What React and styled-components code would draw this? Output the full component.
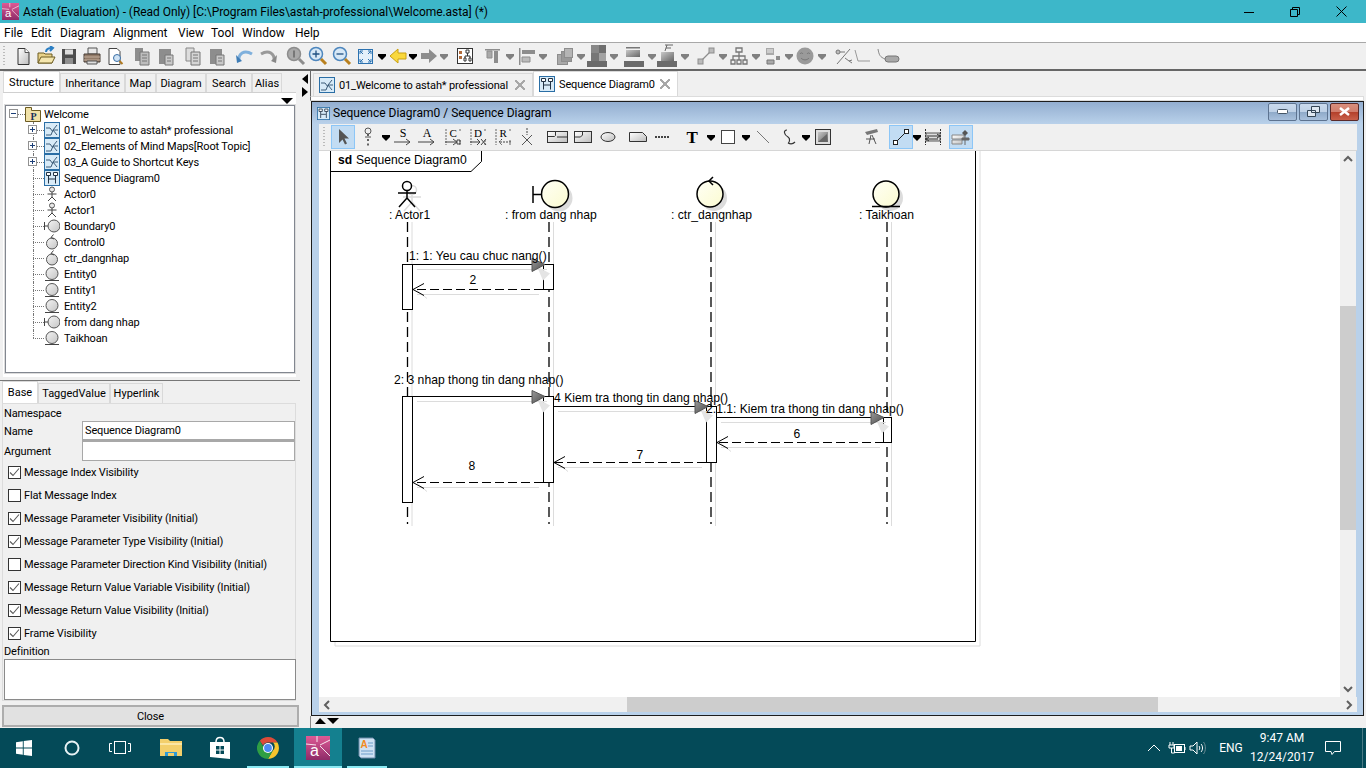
import React from 'react';
import styled, { createGlobalStyle } from 'styled-components';

const UI_FONT = 'Roboto, "Liberation Sans", sans-serif';

const GlobalStyle = createGlobalStyle`
  html, body { margin: 0; padding: 0; background: #f0f0f0; overflow: hidden; }
  * { box-sizing: border-box; }
  body { font-family: ${UI_FONT}; font-size: 11px; letter-spacing: -0.14px; color: #000; }
`;

/* ---------- icons: top toolbar ---------- */
const Ico = ({ w = 20, h = 20, children }) => (
  <svg width={w} height={h} viewBox={`0 0 ${w} ${h}`} style={{ display: 'block', flexShrink: 0 }}>{children}</svg>
);
const G1 = '#8d8d8d';
const G2 = '#a9a9a9';

const NewDoc = () => <Ico><path d="M5 2.500h7l4 4v12H5z" fill="url(#paper)" stroke="#333" /><path d="M12 2.500v4h4" fill="#fff" stroke="#555" /></Ico>;
const OpenDoc = () => <Ico><path d="M2 17V7h6l1 1h7v9z" fill="#e9d38a" stroke="#6d5c22" /><path d="M2 17l3-6h14l-3 6z" fill="#f4e6ae" stroke="#6d5c22" /><path d="M10 6c0-3 2-4 6-4M14 0l3 2-3 3" fill="none" stroke="#2b7fc4" strokeWidth="2" /></Ico>;
const Save = () => <Ico><rect x="3" y="3" width="14" height="15" fill="#4c4c4c" /><rect x="6" y="3.500" width="8" height="5" fill="#dcdcdc" /><rect x="6" y="12" width="8" height="6" fill="#8f8f8f" /></Ico>;
const Print = () => <Ico><path d="M6 2h9v6H6z" fill="#e8e8e8" stroke="#555" /><path d="M2 8h16v8H2z" fill="#927b68" stroke="#4b4038" /><path d="M2 11h16M2 14h16" stroke="#c2ae9c" /><path d="M5 15h10v3H5z" fill="#ddd" stroke="#555" /></Ico>;
const Preview = () => <Ico><path d="M4 2.500h8l3 3v13H4z" fill="#fff" stroke="#444" /><circle cx="12" cy="12" r="3.500" fill="#cfe3f5" stroke="#3a6ea5" /><path d="M14.500 15l3 3" stroke="#b07a22" strokeWidth="2" /></Ico>;
const CopyGray = () => <Ico><path d="M3 2h8v13H3z" fill={G1} /><path d="M8 6h9v13H8z" fill="#bdbdbd" stroke="#777" /><path d="M10 9h5M10 12h5M10 15h5" stroke="#777" /></Ico>;
const PasteGray = () => <Ico><path d="M3 3h12v15H3z" fill={G1} /><path d="M9 9h8v10H9z" fill="#c9c9c9" stroke="#777" /><path d="M11 12h4M11 15h4" stroke="#777" /></Ico>;
const CopyLight = () => <Ico><path d="M3 2h8v13H3z" fill="#ddd" stroke="#888" /><path d="M8 6h9v13H8z" fill="#d5d5d5" stroke="#777" /><path d="M10 9h5M10 12h5M10 15h5" stroke="#777" /></Ico>;
const Undo = () => <Ico><path d="M4 15C3 8 9 3 17 8" fill="none" stroke="#7fb0dc" strokeWidth="3" /><path d="M1 9l6 6-5 2z" fill="#3f7db6" /></Ico>;
const Redo = () => <Ico><path d="M16 15C17 8 11 3 3 8" fill="none" stroke="#999" strokeWidth="3" /><path d="M19 9l-6 6 5 2z" fill="#888" /></Ico>;
const Mag = ({ mark, ring = '#4d86bd', fill = '#d7e8f6', handle = '#b9801e' }) => (
  <Ico>
    <circle cx="8" cy="8" r="6.500" fill={fill} stroke={ring} strokeWidth="1.500" />
    <path d="M13 13l5 5" stroke={handle} strokeWidth="3" />
    {mark}
  </Ico>
);
const ZoomOne = () => <Mag ring={G1} fill={G2} handle={G1} mark={<path d="M7 4.500h2v7H7z" fill="#777" />} />;
const ZoomIn = () => <Mag mark={<path d="M4.500 8h7M8 4.500v7" stroke="#1f4f80" strokeWidth="1.300" />} />;
const ZoomOut = () => <Mag mark={<path d="M4.500 8h7" stroke="#1f4f80" strokeWidth="1.300" />} />;
const Fit = () => <Ico><rect x="3.500" y="3.500" width="14" height="14" fill="#e4f0fa" stroke="#2c72b0" /><path d="M5 5l3 3M5 5h3M5 5v3M16 5l-3 3M16 5h-3M16 5v3M5 16l3-3M5 16h3M5 16v-3M16 16l-3-3M16 16h-3M16 16v-3" stroke="#2c72b0" fill="none" /></Ico>;
const Back = () => <Ico><path d="M2 10l8-7v4h8v6h-8v4z" fill="#f9d83c" stroke="#c9a010" /></Ico>;
const Forward = () => <Ico><path d="M18 10l-8-7v4H2v6h8v4z" fill={G1} /></Ico>;
const TreeGrid = () => <Ico><rect x="2.500" y="2.500" width="15" height="15" fill="#fff" stroke="#333" /><path d="M4 5h3v3H4zM4 10h3v3H4z" fill="#b06a3a" /><path d="M11 4h3v3h-3zM9 12h2v3H9zM14 12h2v3h-2z" fill="none" stroke="#333" /><path d="M12.500 7v3M10 12v-2h5v2" fill="none" stroke="#333" /></Ico>;
const AlignTop = () => <Ico><path d="M2 3h15v1.500H2z" fill={G1} /><path d="M4 5h5v7H4z" fill={G2} stroke={G1} /><path d="M11 5h4v12h-4z" fill={G1} /></Ico>;
const AlignLeft = () => <Ico><path d="M2 2h1.500v17H2z" fill={G1} /><path d="M5 4h13v4H5z" fill={G1} /><path d="M5 11h8v5H5z" fill="#bbb" stroke={G1} /></Ico>;
const Stack = () => <Ico><rect x="2.500" y="8.500" width="10" height="10" fill={G2} stroke={G1} /><rect x="6.500" y="5.500" width="10" height="10" fill="#999" stroke={G1} /><rect x="9.500" y="2.500" width="8" height="9" fill="#b5b5b5" stroke={G1} /></Ico>;
const Checker = () => <Ico h={24}><path d="M4 1h8v8H4z" fill="#888" /><path d="M12 1h7v8h-7z" fill="#6f6f6f" /><path d="M4 9h8v8H4z" fill="#777" /><path d="M12 9h7v8h-7z" fill="#a3a3a3" /><path d="M0 17h20v6H0z" fill="#6b6b6b" /></Ico>;
const Bars = () => <Ico h={24}><path d="M2 3h14v1.500H2z" fill="#777" /><path d="M2 6h14v7H2z" fill="url(#grayfade)" /><path d="M0 17h20v6H0z" fill="#6b6b6b" /></Ico>;
const FontBars = () => <Ico h={24}><path d="M8 1h8M9 4h5M10 1l-2 6" stroke="#666" fill="none" /><path d="M4 8h13v9H4z" fill="url(#grayfade)" /><path d="M0 17h20v6H0z" fill="#6b6b6b" /></Ico>;
const LinkLine = () => <Ico><path d="M5 15L15 5" stroke={G1} strokeWidth="1.300" /><rect x="2" y="13" width="5" height="5" fill="#bbb" stroke={G1} /><rect x="13" y="2" width="5" height="5" fill="#bbb" stroke={G1} /></Ico>;
const OrgChart = () => <Ico><path d="M7 2h6v4H7zM2 14h4v4H2zM8 14h4v4H8zM14 14h4v4h-4z" fill="none" stroke="#777" strokeWidth="1.300" /><path d="M10 6v8M4 14v-4h12v4" fill="none" stroke="#777" strokeWidth="1.300" /></Ico>;
const Blocks = () => <Ico><path d="M3 2h8v7H3z" fill={G2} /><path d="M4 4h6M4 6h6" stroke="#eee" /><path d="M13 10h4v4h-4z" fill={G1} /><path d="M4 14h7v4H4z" fill={G2} stroke="#777" /></Ico>;
const Smile = () => <Ico><circle cx="10" cy="10" r="8.500" fill="#9a9a9a" /><path d="M5 8c1-1.500 2-1.500 3 0M12 8c1-1.500 2-1.500 3 0M6 12c2 2.500 6 2.500 8 0" fill="none" stroke="#777" /></Ico>;
const Percent = () => <Ico><path d="M4 18L17 3" stroke="#777" /><circle cx="5" cy="6" r="2" fill="#bbb" stroke="#777" /><path d="M7 6h5" stroke="#777" /><path d="M12 12l4 3 3-1M16 15l3 2" fill="none" stroke="#777" /></Ico>;
const Elbow = () => <Ico><path d="M3 4l3 11h12" fill="none" stroke="#999" /></Ico>;
const ElbowPill = () => <Ico w={24}><path d="M2 3c1 6 2 8 7 10" fill="none" stroke="#888" /><rect x="9" y="10" width="14" height="6" rx="3" fill={G2} stroke="#777" /></Ico>;
const Caret = ({ gray }) => (
  <Ico w={10} h={10}><path d="M1 3h8v2L5 9 1 5z" fill={gray ? '#808080' : '#000'} /></Ico>
);

/* ---------- icons: diagram toolbar ---------- */
const Arrow = () => <Ico><path d="M6 2l0 14 3.500-3.500 2.500 5 2-1-2.500-5H16z" fill="#555" /></Ico>;
const Lifeline = () => <Ico><circle cx="10" cy="4" r="3" fill="#eee" stroke="#555" /><path d="M10 7v2M10 12v2M10 16.500v2" stroke="#333" strokeWidth="1.500" /><path d="M7 10h6" stroke="#555" /></Ico>;
const MsgGlyph = ({ ch }) => (
  <Ico>
    <text x="10" y="10" textAnchor="middle" fontFamily="Liberation Serif, serif" fontSize="12">{ch}</text>
    <path d="M1 15h16M13 12l4 3-4 3" fill="none" stroke="#444" />
  </Ico>
);
const DashGlyph = ({ ch, tail }) => (
  <Ico>
    <path d="M3 2v16M17 2v3M17 13v5" stroke="#666" strokeDasharray="2 1" />
    <text x="10" y="10" textAnchor="middle" fontFamily="Liberation Serif, serif" fontSize="11">{ch}</text>
    {tail}
  </Ico>
);
const Destroy = () => <Ico><path d="M10 1v7" stroke="#444" strokeDasharray="2 1" /><path d="M5 8l10 10M15 8L5 18" stroke="#555" /></Ico>;
const Fragment = () => <Ico w={24}><rect x="1.500" y="4.500" width="20" height="11" fill="url(#paper)" stroke="#333" /><path d="M1.500 9.500h7l1-1v-4M11 10h10" fill="none" stroke="#333" /></Ico>;
const Ref = () => <Ico><rect x="1.500" y="4.500" width="17" height="11" fill="url(#paper)" stroke="#333" /><path d="M1.500 10h6l2-2V4.500" fill="none" stroke="#333" /></Ico>;
const Oval = () => <Ico w={20}><ellipse cx="10" cy="10" rx="7" ry="4.500" fill="url(#paper)" stroke="#333" /></Ico>;
const Note = () => <Ico w={20}><path d="M1.500 5.500h13l4 4v5h-17z" fill="url(#paper)" stroke="#333" /></Ico>;
const Dots = () => <Ico><path d="M2 10h15" stroke="#444" strokeWidth="2" strokeDasharray="2 1" /></Ico>;
const BigT = () => <Ico><text x="10" y="16" textAnchor="middle" fontFamily="Liberation Serif, serif" fontWeight="700" fontSize="17">T</text></Ico>;
const Rect = () => <Ico><rect x="3.500" y="3.500" width="13" height="13" fill="#fff" stroke="#444" /></Ico>;
const Slash = () => <Ico><path d="M4 4l12 12" stroke="#777" /></Ico>;
const Squiggle = () => <Ico><path d="M9 3c-4 0-3 5 1 7 3 2 1 6 0 6 2 1 5 1 7-1" fill="none" stroke="#333" strokeWidth="1.200" /></Ico>;
const ImageIco = () => <Ico><rect x="2.500" y="2.500" width="15" height="15" fill="#ddd" stroke="#333" /><path d="M5 15V5h10v10z" fill="url(#grayfade)" /><path d="M5 15l9-8v8z" fill="#666" /></Ico>;
const Scope = () => <Ico><path d="M3 5l12-3 1 3-11 3z" fill="#777" /><path d="M9 8l-2 9M10 8l4 9M4 12h9" stroke="#555" fill="none" /></Ico>;
const LineOn = () => <Ico><path d="M5 15L15 5" stroke="#222" /><rect x="2.500" y="13.500" width="4" height="4" fill="#fff" stroke="#222" /><rect x="13.500" y="2.500" width="4" height="4" fill="#fff" stroke="#222" /></Ico>;
const Span = () => <Ico><path d="M2.500 2v16M17.500 2v16" stroke="#333" strokeDasharray="2 1" /><path d="M3 6h14v8H3z" fill="#ddd" stroke="#555" /><path d="M4 9h12M14 7l3 2-3 2M4 12h11M6 10l-3 2 3 2" fill="none" stroke="#333" /></Ico>;
const Props = () => <Ico><path d="M1 8h12v4H1zM1 13h10v4H1z" fill="url(#paper)" stroke="#888" /><path d="M14 3l3 3-3 3-3-3z" fill="#555" /><path d="M11 11h7v2h-7zM14 8v10" fill="#666" stroke="#666" /></Ico>;

/* ---------- icons: tree and tabs ---------- */
const MindIcon = () => <Ico w={16} h={16}><rect x=".5" y=".5" width="15" height="15" fill="#d8ebf8" stroke="#2a6ea5" /><path d="M2 13h5l2-5h5M9 8l4-5M9 8l4 5M2 6h4l3 4" fill="none" stroke="#3d5c78" /></Ico>;
const SeqIcon = ({ size = 16 }) => (
  <svg width={size} height={size} viewBox="0 0 16 16" style={{ display: 'block', flexShrink: 0 }}>
    <rect x=".5" y=".5" width="15" height="15" fill="#d8ebf8" stroke="#2a6ea5" />
    <path d="M2.500 2.500h4v3h-4zM9.500 2.500h4v3h-4z" fill="#fff" stroke="#234" />
    <path d="M4.500 5.500v8M11.500 5.500v8M5 9h6" stroke="#234" fill="none" />
  </svg>
);
const ActorIcon = () => <Ico w={16} h={16}><circle cx="8" cy="3.500" r="2.500" fill="#e8e8e8" stroke="#555" /><path d="M8 6v5M3.500 8h9M8 11l-4 4M8 11l4 4" stroke="#444" fill="none" /></Ico>;
const Ball = ({ cx = 10, cy = 8, r = 6 }) => <circle cx={cx} cy={cy} r={r} fill="url(#ballg)" stroke="#555" />;
const BoundaryIcon = () => <Ico w={16} h={16}><path d="M.5 4v8M.5 8h4" stroke="#444" /><Ball /></Ico>;
const ControlIcon = () => <Ico w={16} h={16}><Ball cx={8} cy={9.500} r={5.500} /><path d="M9.500 .5L7 3.500l3 1.500" fill="none" stroke="#444" /></Ico>;
const EntityIcon = () => <Ico w={16} h={16}><Ball cx={8} cy={7.500} /><path d="M1 14.500h14" stroke="#444" /></Ico>;
const PackageIcon = () => <Ico w={16} h={16}><path d="M.5 1.500h6v3h9v11H.5z" fill="#f1e2a8" stroke="#6d5c22" /><text x="8.500" y="13.500" textAnchor="middle" fontFamily="Liberation Serif, serif" fontWeight="700" fontSize="10" fill="#15305a">P</text></Ico>;

/* ---------- icons: task bar ---------- */
const WinLogo = () => <Ico w={16} h={16}><path d="M0 2.200L6.800 1.200v6.400H0zM7.700 1.100L16 0v7.600H7.700zM0 8.400h6.800v6.400L0 13.800zM7.700 8.400H16V16l-8.300-1.100z" fill="#fff" /></Ico>;
const Cortana = () => <Ico w={16} h={16}><circle cx="8" cy="8" r="6.500" fill="none" stroke="#e8f2f4" strokeWidth="2" /></Ico>;
const TaskView = () => <Ico w={22} h={16}><rect x="5.500" y="1.500" width="11" height="12" fill="none" stroke="#fff" /><path d="M3 3.500H.5v8H3M19 3.500h2.500v8H19" fill="none" stroke="#fff" /></Ico>;
const Explorer = () => <Ico w={22} h={20}><path d="M0 1h8l2 2h12v15H0z" fill="#f3cf6b" /><path d="M0 5h22v2H0z" fill="#fbe6a4" /><path d="M5 18v-4h12v4z" fill="#2f9bd6" /><path d="M8 18v-3h6v3z" fill="#f3cf6b" /></Ico>;
const Store = () => <Ico w={22} h={24}><path d="M1 6h20v17L1 21z" fill="#fff" /><path d="M7 6c0-6 8-6 8 0" fill="none" stroke="#fff" strokeWidth="1.500" /><path d="M7 10h3.500v3.500H7zM11.500 10H15v3.500h-3.500zM7 14.500h3.500V18H7zM11.500 14.500H15V18h-3.500z" fill="#044a58" /></Ico>;
const Chrome = () => (
  <Ico w={22} h={22}>
    <path d="M11 0a11 11 0 0 1 9.500 5.500H11a5.500 5.500 0 0 0-5 3L2.800 3.700A11 11 0 0 1 11 0z" fill="#dd4b39" />
    <path d="M20.500 5.500A11 11 0 0 1 11 22l4.700-8.200a5.500 5.500 0 0 0 .3-8.300z" fill="#f7c52d" />
    <path d="M2.800 3.700L7 11a5 5 0 0 0 8.700 2.800L11 22A11 11 0 0 1 2.800 3.700z" fill="#2f9e44" />
    <circle cx="11" cy="11" r="5" fill="#fff" />
    <circle cx="11" cy="11" r="3.900" fill="#4c8bf5" />
  </Ico>
);
const AstahLogo = ({ size = 24 }) => (
  <svg width={size} height={size} viewBox="0 0 24 24" style={{ display: 'block', flexShrink: 0 }}>
    <rect width="24" height="24" fill="url(#astahg)" />
    <path d="M0 8l10 1M24 4l-10 5M11 0v6M14 10l10 10" stroke="#fff" strokeWidth="1" fill="none" opacity=".85" />
    <text x="8.500" y="20" textAnchor="middle" fontFamily="Liberation Sans, sans-serif" fontSize="16" fill="#fff">a</text>
  </svg>
);
const NotePad = () => <Ico w={20} h={22}><path d="M2 1h14l2 2v18H4l-2-2z" fill="#cfe2f3" stroke="#6d8aa8" /><path d="M11 6h5M11 9h5M4 14h12M4 17h12" stroke="#6d9dc9" /><text x="7" y="11" textAnchor="middle" fontFamily="Liberation Sans, sans-serif" fontWeight="700" fontSize="10" fill="#f28a1e">A</text></Ico>;
const Battery = () => <Ico w={18} h={14}><path d="M2 1v3M5 1v3M1 4h5v3H1zM3.500 7v5h3" fill="none" stroke="#fff" /><rect x="6.500" y="3.500" width="10" height="8" fill="none" stroke="#fff" /><rect x="8" y="5" width="6" height="5" fill="#fff" /><path d="M17 6v3" stroke="#fff" /></Ico>;
const Speaker = () => <Ico w={18} h={14}><path d="M1 5h3l4-4v12L4 9H1z" fill="none" stroke="#fff" /><path d="M10 5c1 1 1 3 0 4M12 3c2 2 2 6 0 8" fill="none" stroke="#fff" /><path d="M14.500 1c2.500 3 2.500 9 0 12" fill="none" stroke="#6d8d95" /></Ico>;
const Chat = () => <Ico w={16} h={16}><path d="M.5 1.500h15v10H9.500L7 14.500l-1-3H.5z" fill="none" stroke="#fff" /></Ico>;
const Check = () => <svg width="11" height="11" viewBox="0 0 11 11" style={{ display: 'block' }}><path d="M1 5.500l3 3 6-7" fill="none" stroke="#5a5a5a" strokeWidth="1.100" /></svg>;

/* ---------- shared bits ---------- */
const SharedDefs = () => (
  <svg width="0" height="0" style={{ position: 'absolute' }}>
    <defs>
      <linearGradient id="paper" x1="0" y1="0" x2="1" y2="1"><stop offset="0" stopColor="#fff" /><stop offset="1" stopColor="#bdbdbd" /></linearGradient>
      <linearGradient id="grayfade" x1="0" y1="0" x2="1" y2="1"><stop offset="0" stopColor="#c8c8c8" /><stop offset="1" stopColor="#666" /></linearGradient>
      <linearGradient id="ballg" x1="0" y1="0" x2="1" y2="1"><stop offset="0" stopColor="#f4f4f4" /><stop offset="1" stopColor="#c4c4c4" /></linearGradient>
      <linearGradient id="astahg" x1="0" y1="0" x2="0" y2="1"><stop offset="0" stopColor="#de5a95" /><stop offset="1" stopColor="#8e2b68" /></linearGradient>
      <linearGradient id="tip" x1="0" y1="0" x2="1" y2="1"><stop offset="0" stopColor="#9a9a9a" /><stop offset="1" stopColor="#4a4a4a" /></linearGradient>
      <linearGradient id="cream" x1="0" y1="0" x2="1" y2="1"><stop offset="0" stopColor="#fffff6" /><stop offset="1" stopColor="#fbfbd0" /></linearGradient>
    </defs>
  </svg>
);

const Page = styled.div`
  width: 1366px;
  height: 768px;
  display: flex;
  flex-direction: column;
  overflow: hidden;
  background: #f0f0f0;
  position: relative;
`;

const TitleBar = styled.div`
  height: 23px;
  flex: none;
  background: #3db7c9;
  display: flex;
  align-items: center;
  padding-left: 2px;
`;
const TitleText = styled.span`
  margin-left: 4px;
  white-space: nowrap;
  font-size: 12px;
  letter-spacing: -0.05px;
`;
const WinGlyphs = styled.div`
  margin-left: auto;
  margin-right: 2px;
  display: flex;
`;
const WinGlyph = styled.div`
  width: 46px;
  height: 23px;
  display: flex;
  align-items: center;
  justify-content: center;
`;

const MenuBar = styled.div`
  height: 20px;
  flex: none;
  background: #fff;
  border-bottom: 1px solid #a8a8a8;
  display: flex;
  align-items: center;
  padding-left: 4px;
`;
const MenuItem = styled.span`
  width: ${(p) => p.$w}px;
  flex: none;
  font-size: 12px;
  letter-spacing: 0;
`;

const MainToolbar = styled.div`
  height: 28px;
  flex: none;
  background: #f0f0f0;
  border-bottom: 2px solid #666;
  display: flex;
  align-items: center;
  position: relative;
`;
const Grip = styled.div`
  position: absolute;
  left: ${(p) => p.$left}px;
  top: 3px;
  width: 2px;
  height: 20px;
  background-image: linear-gradient(#bbb 50%, transparent 50%);
  background-size: 2px 3px;
`;
const Tool = styled.div`
  flex: none;
  margin-left: ${(p) => p.$gap}px;
  display: flex;
  align-items: center;
  justify-content: center;
`;
const ToolOn = styled(Tool)`
  background: #c2dcf3;
  border: 1px solid #8cc6f7;
  height: 24px;
`;

function ToolRow({ items }) {
  let prev = 0;
  return items.map(([center, width, node, on], i) => {
    const gap = center - width / 2 - prev;
    prev = center + width / 2;
    const Wrap = on ? ToolOn : Tool;
    return <Wrap key={i} $gap={gap} style={{ width }}>{node}</Wrap>;
  });
}

const mainTools = [
  [23, 20, <NewDoc />], [46, 20, <OpenDoc />], [69, 20, <Save />], [92, 20, <Print />], [115, 20, <Preview />],
  [142, 20, <CopyGray />], [166, 20, <PasteGray />], [193, 20, <CopyLight />], [217, 20, <PasteGray />],
  [245, 20, <Undo />], [268, 20, <Redo />], [296, 20, <ZoomOne />], [318, 20, <ZoomIn />], [342, 20, <ZoomOut />],
  [365, 20, <Fit />], [382, 10, <Caret />], [398, 20, <Back />], [413, 10, <Caret />], [429, 20, <Forward />],
  [444, 10, <Caret gray />], [465, 20, <TreeGrid />], [493, 20, <AlignTop />], [510, 10, <Caret gray />],
  [527, 20, <AlignLeft />], [543, 10, <Caret gray />], [565, 20, <Stack />], [581, 10, <Caret gray />],
  [597, 20, <Checker />], [614, 10, <Caret gray />], [634, 20, <Bars />], [652, 10, <Caret gray />],
  [667, 20, <FontBars />], [685, 10, <Caret gray />], [706, 20, <LinkLine />], [723, 10, <Caret gray />],
  [739, 20, <OrgChart />], [756, 10, <Caret gray />], [773, 20, <Blocks />], [789, 10, <Caret gray />],
  [805, 20, <Smile />], [822, 10, <Caret gray />], [843, 20, <Percent />], [862, 20, <Elbow />], [888, 24, <ElbowPill />],
];

const diagramTools = [
  [24, 24, <Arrow />, true], [49, 20, <Lifeline />], [67, 10, <Caret />],
  [84, 20, <MsgGlyph ch="S" />], [108, 20, <MsgGlyph ch="A" />],
  [134, 20, <DashGlyph ch="C" tail={<path d="M2 15h11M10 12l4 3-4 3M14 13h3v4h-3z" fill="none" stroke="#444" />} />],
  [159, 20, <DashGlyph ch="D" tail={<path d="M2 15h10M9 12l3 3-3 3M13 12l5 6M18 12l-5 6" fill="none" stroke="#444" />} />],
  [184, 20, <DashGlyph ch="R" tail={<path d="M18 15H6M9 12l-3 3 3 3" fill="none" stroke="#444" strokeDasharray="2 1" />} />],
  [208, 20, <Destroy />], [239, 24, <Fragment />], [264, 20, <Ref />], [289, 20, <Oval />], [319, 20, <Note />],
  [344, 20, <Dots />], [373, 20, <BigT />], [392, 10, <Caret />], [409, 20, <Rect />], [427, 10, <Caret />],
  [444, 20, <Slash />], [469, 20, <Squiggle />], [487, 10, <Caret />], [504, 20, <ImageIco />], [553, 20, <Scope />],
  [582, 24, <LineOn />, true], [598, 10, <Caret />], [614, 20, <Span />], [642, 24, <Props />, true],
];

const Workspace = styled.div`
  flex: 1;
  min-height: 0;
  display: flex;
`;

/* ---------- left pane ---------- */
const LeftPane = styled.div`
  width: 300px;
  flex: none;
  display: flex;
  flex-direction: column;
`;
const TabStrip = styled.div`
  display: flex;
  align-items: flex-end;
  height: ${(p) => p.$h}px;
  padding-left: ${(p) => p.$pad}px;
  flex: none;
`;
const Tab = styled.div`
  width: ${(p) => p.$w}px;
  height: ${(p) => (p.$on ? '100%' : 'calc(100% - 2px)')};
  flex: none;
  background: ${(p) => (p.$on ? '#fff' : '#f0f0f0')};
  border: 1px solid #d9d9d9;
  border-bottom: none;
  display: flex;
  align-items: center;
  justify-content: center;
  white-space: nowrap;
  letter-spacing: 0;
`;
const TreeHolder = styled.div`
  height: 285px;
  flex: none;
  margin: 0 4px 0 3px;
  background: #fff;
  border-top: 1px solid #d0d0d0;
  padding: 12px 1px 4px 2px;
  position: relative;
`;
const DropMark = styled.div`
  position: absolute;
  right: 3px;
  top: 5px;
  border-left: 6px solid transparent;
  border-right: 6px solid transparent;
  border-top: 6px solid #000;
`;
const TreeBox = styled.div`
  height: 268px;
  border: 1px solid #828790;
  box-shadow: 0 0 0 1px #dcdcdc;
  background: #fff;
  overflow: hidden;
`;
const TreeRow = styled.div`
  height: 16px;
  display: flex;
  align-items: center;
  position: relative;
  padding-left: ${(p) => (p.$root ? 19 : 38)}px;
  white-space: nowrap;
  &::before {
    content: '';
    display: ${(p) => (p.$root ? 'none' : 'block')};
    position: absolute;
    left: 27px;
    top: 0;
    height: ${(p) => (p.$last ? 8 : 16)}px;
    border-left: 1px dotted #777;
  }
  &::after {
    content: '';
    position: absolute;
    left: ${(p) => (p.$root ? 8 : 27)}px;
    top: 8px;
    width: 11px;
    border-top: 1px dotted #777;
  }
`;
const TreeIcon = styled.span`
  position: relative;
  z-index: 1;
  background: #fff;
  margin-right: 4px;
  flex: none;
`;
const RootLabel = styled.span`
  margin-left: -1px;
`;
const Expander = styled.span`
  position: absolute;
  z-index: 1;
  left: ${(p) => (p.$root ? 3 : 22)}px;
  top: 3px;
  width: 9px;
  height: 9px;
  background: #fff;
  border: 1px solid #919191;
  &::before {
    content: '';
    position: absolute;
    left: 1px;
    right: 1px;
    top: 3px;
    height: 1px;
    background: #1c3f78;
  }
  &::after {
    content: '';
    display: ${(p) => (p.$plus ? 'block' : 'none')};
    position: absolute;
    top: 1px;
    bottom: 1px;
    left: 3px;
    width: 1px;
    background: #1c3f78;
  }
`;
const PaneRule = styled.div`
  height: 1px;
  margin-top: 3px;
  background: #777;
  flex: none;
`;
const PropPanel = styled.div`
  margin: 0 4px 0 2px;
  background: #f0f0f0;
  border: 1px solid #dcdcdc;
  height: 298px;
  flex: none;
  display: flex;
  flex-direction: column;
`;
const NamespaceLabel = styled.div`
  height: 17px;
  padding: 3px 0 0 1px;
  line-height: 14px;
  white-space: nowrap;
  flex: none;
`;
const PropLabel = styled.div`
  height: 14px;
  padding-left: 1px;
  line-height: 14px;
  white-space: nowrap;
  flex: none;
`;
const FieldRow = styled.div`
  display: grid;
  grid-template-columns: 78px 213px;
  align-items: center;
  height: 20px;
  flex: none;
  padding-left: 1px;
`;
const Input = styled.div`
  height: 100%;
  background: #fff;
  border: 1px solid #a8a8a8;
  border-bottom-width: ${(p) => (p.$thick ? 2 : 1)}px;
  padding-left: 2px;
  line-height: 17px;
`;
const CheckRow = styled.div`
  height: 23px;
  flex: none;
  display: flex;
  align-items: center;
  padding-left: 5px;
  white-space: nowrap;
`;
const CheckBox = styled.span`
  width: 13px;
  height: 13px;
  flex: none;
  background: #fff;
  border: 1px solid #333;
  margin-right: 3px;
  display: flex;
  align-items: center;
  justify-content: center;
`;
const DefinitionBox = styled.div`
  height: 41px;
  flex: none;
  margin: 0 -1px 0 1px;
  background: #fff;
  border: 1px solid #8a8a8a;
`;
const CloseButton = styled.div`
  height: 22px;
  flex: none;
  margin: 4px 1px 0 2px;
  background: #e1e1e1;
  border: 2px solid #adadad;
  display: flex;
  align-items: center;
  justify-content: center;
`;
const Splitter = styled.div`
  width: 10px;
  flex: none;
  padding: 3px 0 0 2px;
  display: flex;
  flex-direction: column;
  gap: 3px;
`;
const SplitArrow = styled.div`
  width: 0;
  height: 0;
  border-top: 5px solid transparent;
  border-bottom: 5px solid transparent;
  border-right: ${(p) => (p.$left ? '6px solid #000' : 'none')};
  border-left: ${(p) => (p.$left ? 'none' : '6px solid #000')};
`;

/* ---------- right pane ---------- */
const RightPane = styled.div`
  flex: 1;
  min-width: 0;
  display: flex;
  flex-direction: column;
`;
const DocTabs = styled.div`
  height: 25px;
  flex: none;
  display: flex;
  align-items: flex-end;
  padding-left: 2px;
  border-left: 1px solid #666;
`;
const DocTab = styled.div`
  width: ${(p) => p.$w}px;
  height: ${(p) => (p.$on ? 25 : 23)}px;
  flex: none;
  display: flex;
  align-items: center;
  padding-left: 5px;
  background: ${(p) => (p.$on ? '#fff' : '#f0f0f0')};
  border: 1px solid #d9d9d9;
  border-bottom: none;
  white-space: nowrap;
`;
const DocTabLabel = styled.span`
  margin-left: 4px;
  flex: 1;
`;
const GrayX = styled.span`
  width: 10px;
  height: 10px;
  margin-right: 7px;
  flex: none;
  background:
    linear-gradient(45deg, transparent 44%, #a8a8a8 44%, #a8a8a8 56%, transparent 56%),
    linear-gradient(-45deg, transparent 44%, #a8a8a8 44%, #a8a8a8 56%, transparent 56%);
`;
const DocRule = styled.div`
  height: 5px;
  flex: none;
  margin-right: 2px;
  background: #fff;
  border: 1px solid #dcdcdc;
  border-left: 1px solid #666;
`;
const InnerWindow = styled.div`
  height: 615px;
  flex: none;
  margin-left: 1px;
  margin-right: 2px;
  border: 1px solid #1d1d1d;
  background: #b9d1ea;
  display: flex;
  flex-direction: column;
`;
const InnerTitle = styled.div`
  height: 22px;
  flex: none;
  display: flex;
  align-items: center;
  padding-left: 5px;
  background: linear-gradient(#93aed0, #b9d1ea);
`;
const InnerTitleText = styled.span`
  margin-left: 3px;
  font-size: 12px;
  letter-spacing: 0;
  white-space: nowrap;
`;
const CtlGroup = styled.div`
  margin-left: auto;
  margin-right: 4px;
  margin-top: -3px;
  display: flex;
  gap: 2px;
`;
const CtlBtn = styled.div`
  width: 29px;
  height: 18px;
  border: 1px solid ${(p) => (p.$close ? '#5a2a2a' : '#5d7390')};
  border-radius: 2px;
  background: ${(p) =>
    p.$close
      ? 'linear-gradient(#d98f7d 0, #d07c6b 50%, #b33f2a 50%, #c9604a 100%)'
      : 'linear-gradient(#c9d9ec 0, #bdd0e6 50%, #8ea9c8 50%, #a8c0dc 100%)'};
  display: flex;
  align-items: center;
  justify-content: center;
`;
const InnerBody = styled.div`
  flex: 1;
  min-height: 0;
  margin: 0 6px 0 7px;
  display: flex;
  flex-direction: column;
`;
const DiagramToolbar = styled.div`
  height: 27px;
  flex: none;
  background: #f0f0f0;
  border-bottom: 1px solid #d6d6d6;
  display: flex;
  align-items: center;
  position: relative;
`;
const CanvasRow = styled.div`
  height: 546px;
  flex: none;
  display: flex;
`;
const Canvas = styled.div`
  width: 1021px;
  flex: none;
  background: #fff;
  overflow: hidden;
`;
const VScroll = styled.div`
  width: 16px;
  flex: none;
  background: #f0f0f0;
  display: flex;
  flex-direction: column;
`;
const ScrollEnd = styled.div`
  height: 16px;
  width: 16px;
  flex: none;
  display: flex;
  align-items: center;
  justify-content: center;
`;
const VThumb = styled.div`
  width: 16px;
  height: 224px;
  margin-top: 139px;
  margin-bottom: auto;
  background: #cdcdcd;
  flex: none;
`;
const HScroll = styled.div`
  height: 15px;
  flex: none;
  background: #f0f0f0;
  display: flex;
  align-items: center;
`;
const HThumb = styled.div`
  height: 15px;
  width: 531px;
  margin-left: 292px;
  margin-right: auto;
  background: #cdcdcd;
  flex: none;
`;
const BottomStrip = styled.div`
  flex: 1;
  display: flex;
  align-items: flex-start;
  padding: 2px 0 0 4px;
  gap: 1px;
  border-left: 1px solid #888;
  background: #f0f0f0;
`;
const UpMark = styled.div`
  border-left: 5px solid transparent;
  border-right: 6px solid transparent;
  border-bottom: 6px solid #000;
`;
const DownMark = styled.div`
  border-left: 6px solid transparent;
  border-right: 6px solid transparent;
  border-top: 6px solid #000;
`;

/* ---------- task bar ---------- */
const Taskbar = styled.div`
  height: 40px;
  flex: none;
  background: #044a58;
  display: flex;
  align-items: center;
  color: #fff;
`;
const TaskSlot = styled.div`
  width: ${(p) => p.$w}px;
  height: 40px;
  flex: none;
  display: flex;
  align-items: center;
  justify-content: center;
  background: ${(p) => (p.$active ? '#14808f' : 'transparent')};
  position: relative;
  &::after {
    content: '';
    display: ${(p) => (p.$open ? 'block' : 'none')};
    position: absolute;
    left: ${(p) => (p.$active ? 0 : 5)}px;
    right: ${(p) => (p.$active ? 0 : 5)}px;
    bottom: 0;
    height: 2px;
    background: #8beaf3;
  }
`;
const Tray = styled.div`
  margin-left: auto;
  display: flex;
  align-items: center;
  height: 40px;
  padding-right: 3px;
`;
const TrayItem = styled.div`
  width: ${(p) => p.$w}px;
  flex: none;
  display: flex;
  align-items: center;
  justify-content: center;
  font-size: 12px;
  letter-spacing: 0;
  text-align: center;
  line-height: 19px;
  white-space: nowrap;
`;
const TrayEdge = styled.div`
  width: 1px;
  height: 40px;
  margin-left: 6px;
  background: #4a7a85;
`;

/* ---------- the diagram ---------- */
const D = styled.svg`
  display: block;
  font-family: "Liberation Sans", Arial, sans-serif;
  font-size: 12.15px;
  letter-spacing: 0;
`;
const SH = '#dcdcdc';

const Life = ({ x, from }) => (
  <>
    <path d={`M${x + 4.5} ${from}V526`} stroke={SH} />
    <path d={`M${x} ${from}V524`} stroke="#000" strokeWidth="1.300" strokeDasharray="10 5" />
  </>
);
const Activation = ({ x, y1, y2, w = 10 }) => (
  <rect x={x} y={y1} width={w} height={y2 - y1} fill="#fff" stroke="#000" />
);
const Sync = ({ x1, x2, y, label, lx, ly }) => (
  <>
    <path d={`M${x1 + 4} ${y + 5}H${x2 + 3}`} stroke={SH} />
    <path d={`M${x2 - 10} ${y - 1}l13 7-7 7z`} fill="#e4e4e4" transform="translate(3 3)" />
    <path d={`M${x1} ${y}H${x2}`} stroke="#000" />
    <path d={`M${x2 - 12} ${y - 6}V${y + 7}L${x2 + 1} ${y}z`} fill="url(#tip)" stroke="#555" />
    <text x={lx} y={ly}>{label}</text>
  </>
);
const Ret = ({ x1, x2, y, label, lx, ly }) => (
  <>
    <path d={`M${x1 - 4} ${y + 5}H${x2 + 4}M${x2 + 4} ${y + 1}l10 8`} stroke={SH} fill="none" />
    <path d={`M${x1} ${y}H${x2}`} stroke="#000" strokeDasharray="9 4" />
    <path d={`M${x2 + 11} ${y - 6}L${x2} ${y}L${x2 + 11} ${y + 6}`} fill="none" stroke="#000" />
    <text x={lx} y={ly} textAnchor="middle">{label}</text>
  </>
);

const SequenceDiagram = () => (
  <D width="1021" height="546" viewBox="319 151 1021 546">
    {/* frame */}
    <path d="M335 151V646H980V151" fill="none" stroke={SH} />
    <path d="M330.500 151V641.500H975.500V151" fill="#fff" stroke="#000" />
    <path d="M330.500 171.500H471l10.500-10V151" fill="none" stroke="#000" />
    <text x="338" y="164" fontWeight="700">sd</text>
    <text x="356" y="164">Sequence Diagram0</text>

    {/* lifelines */}
    <Life x={407.5} from={222} />
    <Life x={549} from={222} />
    <Life x={711} from={222} />
    <Life x={887} from={222} />

    {/* actor */}
    <g stroke={SH} fill="none" strokeWidth="1.500" transform="translate(5 4)">
      <circle cx="407" cy="186" r="4.500" /><path d="M407 191v7M398 193h18M407 198l-8 9M407 198l8 9" />
    </g>
    <g stroke="#000" fill="#fff" strokeWidth="1.500">
      <circle cx="407" cy="186" r="4.500" /><path d="M407 191v7M398 193h18M407 198l-8 9M407 198l8 9" fill="none" />
    </g>
    <text x="389" y="219">: Actor1</text>

    {/* boundary */}
    <circle cx="559" cy="198" r="13.500" fill={SH} />
    <circle cx="555" cy="194" r="13.500" fill="url(#cream)" stroke="#000" strokeWidth="1.500" />
    <path d="M533 186v17M533 194.500h8" stroke="#000" strokeWidth="1.500" />
    <text x="505" y="219">: from dang nhap</text>

    {/* control */}
    <circle cx="714" cy="198" r="13" fill={SH} />
    <circle cx="710" cy="194" r="13" fill="url(#cream)" stroke="#000" strokeWidth="1.500" />
    <path d="M713 177l-4 4 4 4" fill="none" stroke="#000" strokeWidth="1.500" />
    <text x="671" y="219">: ctr_dangnhap</text>

    {/* entity */}
    <circle cx="890" cy="198" r="13" fill={SH} />
    <circle cx="886" cy="194" r="13" fill="url(#cream)" stroke="#000" strokeWidth="1.500" />
    <path d="M872 206.500h28" stroke="#000" strokeWidth="1.500" />
    <text x="859" y="219">: Taikhoan</text>

    {/* first exchange */}
    <Activation x={402.5} y1={264.5} y2={309.5} />
    <Activation x={543.5} y1={264.5} y2={289.5} />
    <Sync x1={413} x2={544} y={264.5} label="1: 1: Yeu cau chuc nang()" lx={409} ly={260} />
    <Ret x1={543} x2={413} y={289.5} label="2" lx={473} ly={284} />

    {/* second exchange */}
    <Activation x={402.5} y1={396.5} y2={502.5} />
    <Activation x={543.5} y1={396.5} y2={482.5} />
    <Activation x={706.5} y1={406.5} y2={462.5} />
    <Activation x={883.5} y1={417.5} y2={442.5} w={8} />
    <Sync x1={413} x2={544} y={396.5} label="2: 3 nhap thong tin dang nhap()" lx={394} ly={384} />
    <Sync x1={554} x2={707} y={406.5} label="4 Kiem tra thong tin dang nhap()" lx={554} ly={402} />
    <Sync x1={717} x2={883} y={417.5} label="2.1.1: Kiem tra thong tin dang nhap()" lx={706} ly={413} />
    <Ret x1={884} x2={717} y={442.5} label="6" lx={797} ly={438} />
    <Ret x1={706} x2={554} y={462.5} label="7" lx={640} ly={459} />
    <Ret x1={543} x2={413} y={482.5} label="8" lx={472} ly={470} />
  </D>
);

const treeRows = [
  [<MindIcon />, '01_Welcome to astah* professional', true],
  [<MindIcon />, '02_Elements of Mind Maps[Root Topic]', true],
  [<MindIcon />, '03_A Guide to Shortcut Keys', true],
  [<SeqIcon />, 'Sequence Diagram0'],
  [<ActorIcon />, 'Actor0'],
  [<ActorIcon />, 'Actor1'],
  [<BoundaryIcon />, 'Boundary0'],
  [<ControlIcon />, 'Control0'],
  [<ControlIcon />, 'ctr_dangnhap'],
  [<EntityIcon />, 'Entity0'],
  [<EntityIcon />, 'Entity1'],
  [<EntityIcon />, 'Entity2'],
  [<BoundaryIcon />, 'from dang nhap'],
  [<EntityIcon />, 'Taikhoan'],
];

const checks = [
  ['Message Index Visibility', true],
  ['Flat Message Index', false],
  ['Message Parameter Visibility (Initial)', true],
  ['Message Parameter Type Visibility (Initial)', true],
  ['Message Parameter Direction Kind Visibility (Initial)', false],
  ['Message Return Value Variable Visibility (Initial)', true],
  ['Message Return Value Visibility (Initial)', true],
  ['Frame Visibility', true],
];

const menus = [['File', 27], ['Edit', 29], ['Diagram', 53], ['Alignment', 65], ['View', 33], ['Tool', 31], ['Window', 53], ['Help', 30]];

const ScrollGlyph = ({ d }) => (
  <svg width="10" height="10" viewBox="0 0 10 10"><path d={d} fill="none" stroke="#606060" strokeWidth="2" /></svg>
);

export default function App() {
  return (
    <Page>
      <GlobalStyle />
      <SharedDefs />
      <TitleBar>
        <AstahLogo size={17} />
        <TitleText>Astah (Evaluation) - (Read Only) [C:\Program Files\astah-professional\Welcome.asta] (*)</TitleText>
        <WinGlyphs>
          <WinGlyph><svg width="10" height="10"><path d="M0 5.500h10" stroke="#000" /></svg></WinGlyph>
          <WinGlyph><svg width="10" height="10"><path d="M.5 2.500h7v7h-7zM2.500 2.500v-2h7v7h-2" fill="none" stroke="#000" /></svg></WinGlyph>
          <WinGlyph><svg width="11" height="11"><path d="M.5.500l10 10M10.500.500l-10 10" stroke="#000" /></svg></WinGlyph>
        </WinGlyphs>
      </TitleBar>

      <MenuBar>
        {menus.map(([m, w]) => <MenuItem key={m} $w={w}>{m}</MenuItem>)}
      </MenuBar>

      <MainToolbar>
        <Grip $left={3} />
        <ToolRow items={mainTools} />
      </MainToolbar>

      <Workspace>
        <LeftPane>
          <TabStrip $h={21} $pad={3}>
            <Tab $w={57} $on>Structure</Tab>
            <Tab $w={65}>Inheritance</Tab>
            <Tab $w={31}>Map</Tab>
            <Tab $w={50}>Diagram</Tab>
            <Tab $w={46}>Search</Tab>
            <Tab $w={30}>Alias</Tab>
          </TabStrip>
          <TreeHolder>
            <DropMark />
            <TreeBox>
              <TreeRow $root>
                <Expander $root />
                <TreeIcon><PackageIcon /></TreeIcon>
                <RootLabel>Welcome</RootLabel>
              </TreeRow>
              {treeRows.map(([icon, label, plus], i) => (
                <TreeRow key={label} $last={i === treeRows.length - 1}>
                  {plus && <Expander $plus />}
                  <TreeIcon>{icon}</TreeIcon>
                  {label}
                </TreeRow>
              ))}
            </TreeBox>
          </TreeHolder>
          <PaneRule />
          <TabStrip $h={22} $pad={2}>
            <Tab $w={36} $on>Base</Tab>
            <Tab $w={72}>TaggedValue</Tab>
            <Tab $w={53}>Hyperlink</Tab>
          </TabStrip>
          <PropPanel>
            <NamespaceLabel>Namespace</NamespaceLabel>
            <FieldRow>Name<Input $thick>Sequence Diagram0</Input></FieldRow>
            <FieldRow>Argument<Input /></FieldRow>
            {checks.map(([label, on]) => (
              <CheckRow key={label}>
                <CheckBox>{on && <Check />}</CheckBox>
                {label}
              </CheckRow>
            ))}
            <PropLabel>Definition</PropLabel>
            <DefinitionBox />
          </PropPanel>
          <CloseButton>Close</CloseButton>
        </LeftPane>

        <Splitter>
          <SplitArrow $left />
          <SplitArrow />
        </Splitter>

        <RightPane>
          <DocTabs>
            <DocTab $w={220}><MindIcon /><DocTabLabel>01_Welcome to astah* professional</DocTabLabel><GrayX /></DocTab>
            <DocTab $w={145} $on><SeqIcon /><DocTabLabel>Sequence Diagram0</DocTabLabel><GrayX /></DocTab>
          </DocTabs>
          <DocRule />
          <InnerWindow>
            <InnerTitle>
              <SeqIcon size={13} />
              <InnerTitleText>Sequence Diagram0 / Sequence Diagram</InnerTitleText>
              <CtlGroup>
                <CtlBtn><svg width="11" height="6"><rect x=".5" y=".5" width="10" height="4" rx="1" fill="#fff" stroke="#456" /></svg></CtlBtn>
                <CtlBtn><svg width="13" height="11"><path d="M4.500.500h8v6h-8zM.5 4.500h8v6h-8z" fill="#dfe8f2" stroke="#345" /></svg></CtlBtn>
                <CtlBtn $close><svg width="13" height="9"><path d="M2 1l9 7M11 1L2 8" stroke="#fff" strokeWidth="2.500" /></svg></CtlBtn>
              </CtlGroup>
            </InnerTitle>
            <InnerBody>
              <DiagramToolbar>
                <Grip $left={4} />
                <ToolRow items={diagramTools} />
              </DiagramToolbar>
              <CanvasRow>
                <Canvas><SequenceDiagram /></Canvas>
                <VScroll>
                  <ScrollEnd><ScrollGlyph d="M1 7l4-4 4 4" /></ScrollEnd>
                  <VThumb />
                  <ScrollEnd><ScrollGlyph d="M1 3l4 4 4-4" /></ScrollEnd>
                </VScroll>
              </CanvasRow>
              <HScroll>
                <ScrollEnd><ScrollGlyph d="M7 1L3 5l4 4" /></ScrollEnd>
                <HThumb />
                <ScrollEnd><ScrollGlyph d="M3 1l4 4-4 4" /></ScrollEnd>
              </HScroll>
            </InnerBody>
          </InnerWindow>
          <BottomStrip>
            <UpMark />
            <DownMark />
          </BottomStrip>
        </RightPane>
      </Workspace>

      <Taskbar>
        <TaskSlot $w={48}><WinLogo /></TaskSlot>
        <TaskSlot $w={48}><Cortana /></TaskSlot>
        <TaskSlot $w={48}><TaskView /></TaskSlot>
        <TaskSlot $w={54}><Explorer /></TaskSlot>
        <TaskSlot $w={44}><Store /></TaskSlot>
        <TaskSlot $w={52} $open><Chrome /></TaskSlot>
        <TaskSlot $w={48} $active $open><AstahLogo /></TaskSlot>
        <TaskSlot $w={50} $open><NotePad /></TaskSlot>
        <Tray>
          <TrayItem $w={24}><svg width="14" height="8"><path d="M1 7l6-6 6 6" fill="none" stroke="#fff" /></svg></TrayItem>
          <TrayItem $w={22}><Battery /></TrayItem>
          <TrayItem $w={20}><Speaker /></TrayItem>
          <TrayItem $w={46}>ENG</TrayItem>
          <TrayItem $w={56}>9:47 AM<br />12/24/2017</TrayItem>
          <TrayItem $w={46}><Chat /></TrayItem>
          <TrayEdge />
        </Tray>
      </Taskbar>
    </Page>
  );
}
